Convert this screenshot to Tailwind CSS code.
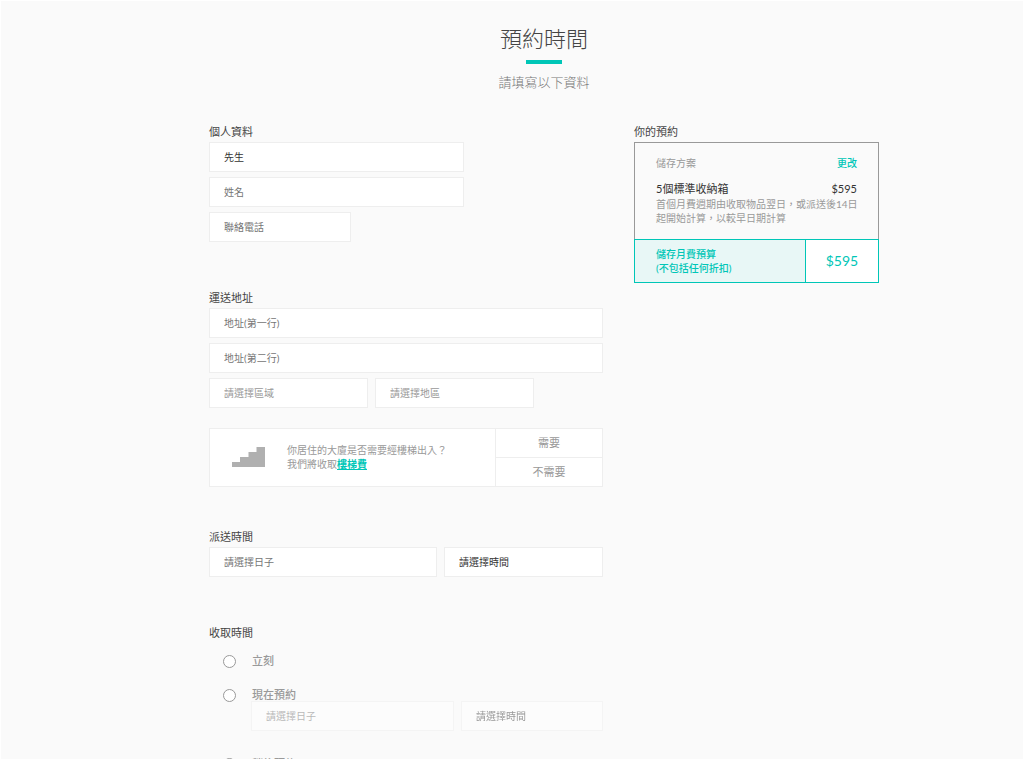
<!DOCTYPE html>
<html lang="zh-Hant">
<head>
<meta charset="utf-8">
<meta name="viewport" content="width=device-width, initial-scale=1">
<title>預約時間</title>
<script src="https://cdn.jsdelivr.net/npm/@tailwindcss/browser@4"></script>
</head>
<body class="h-screen overflow-hidden border border-white bg-[#fafafa] font-['Lato','Noto_Sans_CJK_TC',sans-serif] text-[10px] leading-[14px] text-[#999]">
<main class="pl-16">
  <div class="mx-auto max-w-[670px]">
    <header class="flex flex-col items-center pt-[21px]">
      <h1 class="text-[22px] leading-[34px] font-light text-[#444]">預約時間</h1>
      <div class="mt-1 h-1 w-9 bg-[#00c6b7]"></div>
      <p class="mt-2 text-[13px] leading-5 font-light text-[#777]">請填寫以下資料</p>
    </header>

    <div class="mt-[31px] flex items-start justify-between gap-7">
      <form class="w-[394px]">
        <fieldset class="flex flex-col items-start gap-[5px]">
          <legend class="mb-px text-[11px] leading-[18px] text-[#444]">個人資料</legend>
          <select aria-label="稱謂" class="h-[30px] w-[255px] appearance-none border border-[#eee] bg-white px-[14px] text-[#333]"><option>先生</option><option>小姐</option></select>
          <input aria-label="姓名" placeholder="姓名" class="h-[30px] w-[255px] border border-[#eee] bg-white px-[14px] placeholder:text-[#757575]">
          <input aria-label="聯絡電話" type="tel" placeholder="聯絡電話" class="h-[30px] w-[142px] border border-[#eee] bg-white px-[14px] placeholder:text-[#757575]">
        </fieldset>

        <fieldset class="mt-[47px] flex flex-col gap-[5px]">
          <legend class="mb-px text-[11px] leading-[18px] text-[#444]">運送地址</legend>
          <input aria-label="地址(第一行)" placeholder="地址(第一行)" class="h-[30px] w-full border border-[#eee] bg-white px-[14px] placeholder:text-[#757575]">
          <input aria-label="地址(第二行)" placeholder="地址(第二行)" class="h-[30px] w-full border border-[#eee] bg-white px-[14px] placeholder:text-[#757575]">
          <div class="flex gap-[7px]">
            <select aria-label="區域" class="h-[30px] w-[159px] appearance-none border border-[#eee] bg-white px-[14px] text-[#999]"><option>請選擇區域</option></select>
            <select aria-label="地區" class="h-[30px] w-[159px] appearance-none border border-[#eee] bg-white px-[14px] text-[#999]"><option>請選擇地區</option></select>
          </div>
        </fieldset>

        <section class="mt-5 flex h-[59px] border border-[#eee] bg-white">
          <div class="flex flex-1 items-center pb-[2px]">
            <svg class="ml-[21px] h-[21px] w-[34px]" viewBox="0 0 34 21" fill="#b0b0b0" aria-hidden="true"><path d="M1 21V16H9V11H17.500V6H25.500V1H34V21Z"/></svg>
            <p class="ml-[22px]">你居住的大廈是否需要經樓梯出入？<br>我們將收取<a href="#" class="font-bold text-[#00c6b7] underline">樓梯費</a></p>
          </div>
          <div class="flex w-[107px] flex-col divide-y divide-[#eee] border-l border-[#eee] text-[11px]">
            <button type="button" class="flex-1">需要</button>
            <button type="button" class="flex-1">不需要</button>
          </div>
        </section>

        <fieldset class="mt-[41px]">
          <legend class="mb-px text-[11px] leading-[18px] text-[#444]">派送時間</legend>
          <div class="flex gap-[7px]">
            <input aria-label="派送日子" placeholder="請選擇日子" class="h-[30px] min-w-0 flex-1 border border-[#eee] bg-white px-[14px] placeholder:text-[#757575]">
            <select aria-label="派送時間" class="h-[30px] w-[159px] appearance-none border border-[#eee] bg-white px-[14px] text-[#333]"><option>請選擇時間</option></select>
          </div>
        </fieldset>

        <fieldset class="mt-[47px]">
          <legend class="text-[11px] leading-[18px] text-[#444]">收取時間</legend>
          <label class="mt-[9px] flex h-5 items-center pl-[14px] text-[11px] font-medium"><input type="radio" name="pickup" class="mr-4 size-[13px] appearance-none rounded-full border border-[#999] bg-white">立刻</label>
          <label class="mt-[14px] flex h-5 items-center pl-[14px] text-[11px] font-medium"><input type="radio" name="pickup" class="mr-4 size-[13px] appearance-none rounded-full border border-[#999] bg-white">現在預約</label>
          <div class="-mt-1 flex gap-[7px] pl-[42px] opacity-50">
            <input aria-label="收取日子" placeholder="請選擇日子" disabled class="h-[30px] min-w-0 flex-1 border border-[#eee] bg-white px-[14px] placeholder:text-[#757575]">
            <select aria-label="收取時間" disabled class="h-[30px] w-[142px] appearance-none border border-[#eee] bg-white px-[14px] text-[#333]"><option>請選擇時間</option></select>
          </div>
          <label class="mt-[23px] flex h-5 items-center pl-[14px] text-[11px] font-medium"><input type="radio" name="pickup" class="mr-4 size-[13px] appearance-none rounded-full border border-[#999] bg-white">稍後預約</label>
        </fieldset>
      </form>

      <aside class="w-[245px]">
        <h2 class="mb-px text-[11px] leading-[18px] text-[#444]">你的預約</h2>
        <div class="border border-[#999]">
          <div class="px-[21px] pt-[13px] pb-[14px]">
            <div class="flex justify-between"><span>儲存方案</span><a href="#" class="font-medium text-[#00c6b7]">更改</a></div>
            <div class="mt-3 flex justify-between text-[11px] text-[#333]"><span>5個標準收納箱</span><span>$595</span></div>
            <p class="mt-px whitespace-nowrap">首個月費週期由收取物品翌日，或派送後14日<br>起開始計算，以較早日期計算</p>
          </div>
          <div class="-mx-px -mb-px flex h-11 border border-[#00c6b7] text-[#00c6b7]">
            <p class="flex flex-1 items-center bg-[#e8f7f6] pl-[21px] font-medium">儲存月費預算<br>(不包括任何折扣)</p>
            <strong class="flex w-[73px] items-center justify-center border-l border-[#00c6b7] bg-white text-[14px] font-normal">$595</strong>
          </div>
        </div>
      </aside>
    </div>
  </div>
</main>
</body>
</html>
